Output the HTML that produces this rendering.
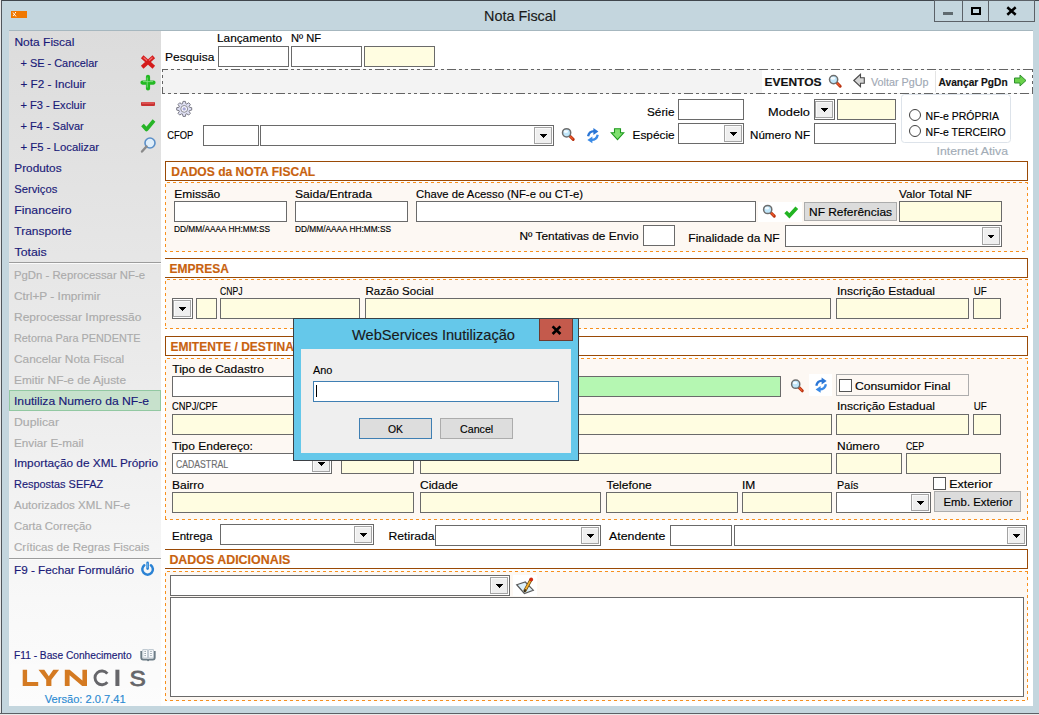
<!DOCTYPE html>
<html><head><meta charset="utf-8"><title>Nota Fiscal</title>
<style>html,body{margin:0;padding:0;background:#c4d6de;overflow:hidden}svg text{font-family:"Liberation Sans",sans-serif}</style>
</head><body>
<svg width="1039" height="715" viewBox="0 0 1039 715" shape-rendering="crispEdges" style="display:block">
<defs>
<linearGradient id="sb" x1="0" y1="0" x2="0" y2="1">
<stop offset="0" stop-color="#dcdcdc"/><stop offset="0.5" stop-color="#ebebeb"/><stop offset="0.84" stop-color="#f8f8f8"/><stop offset="1" stop-color="#fcfcfc"/>
</linearGradient>
</defs>
<rect x="0" y="0" width="1039" height="715" fill="#c4d6de" />
<rect x="0" y="0" width="1039" height="1" fill="#40464c" />
<rect x="0" y="0" width="1" height="715" fill="#e9e9e9" />
<rect x="1" y="0" width="1" height="713" fill="#50565c" />
<rect x="0" y="713" width="1039" height="1" fill="#5c6166" />
<rect x="0" y="714" width="1039" height="1" fill="#eaeaea" />
<rect x="11" y="11" width="16" height="7" fill="#f07800" />
<path d="M13 12.5 L16 16.5 M13 16 L15 13.5 M15.5 12 L15.5 13" stroke="#fff" stroke-width="1" shape-rendering="auto"/>
<text x="484" y="21" font-size="15" fill="#1b1b1b" textLength="72" lengthAdjust="spacingAndGlyphs" stroke="#1b1b1b" stroke-width="0.15" font-family="Liberation Sans" shape-rendering="auto">Nota Fiscal</text>
<rect x="934.5" y="0.5" width="100" height="21" fill="#c4d6de" stroke="#5b6167" stroke-width="1" />
<rect x="962" y="0" width="1" height="22" fill="#5b6167" />
<rect x="988" y="0" width="1" height="22" fill="#5b6167" />
<rect x="943" y="12" width="10" height="3" fill="#5f6a6f" />
<rect x="972.0" y="8.0" width="8" height="6" fill="none" stroke="#000" stroke-width="2" />
<path d="M1007.3 7.3 L1015.7 14.7 M1015.7 7.3 L1007.3 14.7" stroke="#000" stroke-width="2.5" shape-rendering="auto"/>
<rect x="9" y="30" width="1024" height="1" fill="#a6b7bf" />
<rect x="9" y="31" width="152" height="675" fill="url(#sb)" />
<rect x="161" y="31" width="872" height="675" fill="#ffffff" />
<text x="14.4" y="45.7" font-size="11.52" fill="#1a1a78" textLength="60" lengthAdjust="spacingAndGlyphs" stroke="#1a1a78" stroke-width="0.15" font-family="Liberation Sans" >Nota Fiscal</text>
<text x="20.5" y="66.7" font-size="11.52" fill="#1a1a78" textLength="77.4" lengthAdjust="spacingAndGlyphs" stroke="#1a1a78" stroke-width="0.15" font-family="Liberation Sans" >+ SE - Cancelar</text>
<text x="20.5" y="87.6" font-size="11.52" fill="#1a1a78" textLength="65.4" lengthAdjust="spacingAndGlyphs" stroke="#1a1a78" stroke-width="0.15" font-family="Liberation Sans" >+ F2 - Incluir</text>
<text x="20.5" y="108.6" font-size="11.52" fill="#1a1a78" textLength="65.4" lengthAdjust="spacingAndGlyphs" stroke="#1a1a78" stroke-width="0.15" font-family="Liberation Sans" >+ F3 - Excluir</text>
<text x="20.5" y="129.6" font-size="11.52" fill="#1a1a78" textLength="63.3" lengthAdjust="spacingAndGlyphs" stroke="#1a1a78" stroke-width="0.15" font-family="Liberation Sans" >+ F4 - Salvar</text>
<text x="20.5" y="150.6" font-size="11.52" fill="#1a1a78" textLength="78.5" lengthAdjust="spacingAndGlyphs" stroke="#1a1a78" stroke-width="0.15" font-family="Liberation Sans" >+ F5 - Localizar</text>
<text x="14.3" y="171.6" font-size="11.52" fill="#1a1a78" textLength="47.3" lengthAdjust="spacingAndGlyphs" stroke="#1a1a78" stroke-width="0.15" font-family="Liberation Sans" >Produtos</text>
<text x="14.3" y="192.6" font-size="11.52" fill="#1a1a78" textLength="43" lengthAdjust="spacingAndGlyphs" stroke="#1a1a78" stroke-width="0.15" font-family="Liberation Sans" >Serviços</text>
<text x="14.3" y="213.6" font-size="11.52" fill="#1a1a78" textLength="57.4" lengthAdjust="spacingAndGlyphs" stroke="#1a1a78" stroke-width="0.15" font-family="Liberation Sans" >Financeiro</text>
<text x="14.3" y="234.6" font-size="11.52" fill="#1a1a78" textLength="57.4" lengthAdjust="spacingAndGlyphs" stroke="#1a1a78" stroke-width="0.15" font-family="Liberation Sans" >Transporte</text>
<text x="14.5" y="255.6" font-size="11.52" fill="#1a1a78" textLength="32.2" lengthAdjust="spacingAndGlyphs" stroke="#1a1a78" stroke-width="0.15" font-family="Liberation Sans" >Totais</text>
<rect x="9" y="262" width="152" height="1" fill="#9c9c9c" />
<rect x="9" y="263" width="152" height="1" fill="#fbfbfb" />
<rect x="9.5" y="390.5" width="151" height="20" fill="#c7e1cc" stroke="#92c8a2" stroke-width="1" />
<text x="14" y="279.0" font-size="11.52" fill="#ababab" textLength="131" lengthAdjust="spacingAndGlyphs" stroke="#ababab" stroke-width="0.15" font-family="Liberation Sans" >PgDn - Reprocessar NF-e</text>
<text x="14" y="299.94" font-size="11.52" fill="#ababab" textLength="86.4" lengthAdjust="spacingAndGlyphs" stroke="#ababab" stroke-width="0.15" font-family="Liberation Sans" >Ctrl+P - Imprimir</text>
<text x="14" y="320.88" font-size="11.52" fill="#ababab" textLength="127.4" lengthAdjust="spacingAndGlyphs" stroke="#ababab" stroke-width="0.15" font-family="Liberation Sans" >Reprocessar Impressão</text>
<text x="14" y="341.82" font-size="11.52" fill="#ababab" textLength="126.6" lengthAdjust="spacingAndGlyphs" stroke="#ababab" stroke-width="0.15" font-family="Liberation Sans" >Retorna Para PENDENTE</text>
<text x="14" y="362.76" font-size="11.52" fill="#ababab" textLength="110.2" lengthAdjust="spacingAndGlyphs" stroke="#ababab" stroke-width="0.15" font-family="Liberation Sans" >Cancelar Nota Fiscal</text>
<text x="14" y="383.7" font-size="11.52" fill="#ababab" textLength="112" lengthAdjust="spacingAndGlyphs" stroke="#ababab" stroke-width="0.15" font-family="Liberation Sans" >Emitir NF-e de Ajuste</text>
<text x="14" y="404.64" font-size="11.52" fill="#1a1a78" textLength="135" lengthAdjust="spacingAndGlyphs" stroke="#1a1a78" stroke-width="0.15" font-family="Liberation Sans" >Inutiliza Numero da NF-e</text>
<text x="14" y="425.58" font-size="11.52" fill="#ababab" textLength="45" lengthAdjust="spacingAndGlyphs" stroke="#ababab" stroke-width="0.15" font-family="Liberation Sans" >Duplicar</text>
<text x="14" y="446.52" font-size="11.52" fill="#ababab" textLength="69.6" lengthAdjust="spacingAndGlyphs" stroke="#ababab" stroke-width="0.15" font-family="Liberation Sans" >Enviar E-mail</text>
<text x="14" y="467.46" font-size="11.52" fill="#1a1a78" textLength="144" lengthAdjust="spacingAndGlyphs" stroke="#1a1a78" stroke-width="0.15" font-family="Liberation Sans" >Importação de XML Próprio</text>
<text x="14" y="488.4" font-size="11.52" fill="#1a1a78" textLength="89.2" lengthAdjust="spacingAndGlyphs" stroke="#1a1a78" stroke-width="0.15" font-family="Liberation Sans" >Respostas SEFAZ</text>
<text x="14" y="509.34" font-size="11.52" fill="#ababab" textLength="116.2" lengthAdjust="spacingAndGlyphs" stroke="#ababab" stroke-width="0.15" font-family="Liberation Sans" >Autorizados XML NF-e</text>
<text x="14" y="530.28" font-size="11.52" fill="#ababab" textLength="77.5" lengthAdjust="spacingAndGlyphs" stroke="#ababab" stroke-width="0.15" font-family="Liberation Sans" >Carta Correção</text>
<text x="14" y="551.22" font-size="11.52" fill="#ababab" textLength="135.3" lengthAdjust="spacingAndGlyphs" stroke="#ababab" stroke-width="0.15" font-family="Liberation Sans" >Críticas de Regras Fiscais</text>
<rect x="9" y="558" width="152" height="1" fill="#9c9c9c" />
<rect x="9" y="559" width="152" height="1" fill="#fbfbfb" />
<text x="14" y="574" font-size="11.52" fill="#1a1a78" textLength="120" lengthAdjust="spacingAndGlyphs" stroke="#1a1a78" stroke-width="0.15" font-family="Liberation Sans" >F9 - Fechar Formulário</text>
<text x="14" y="658.6" font-size="10" fill="#1a1a78" textLength="117.6" lengthAdjust="spacingAndGlyphs" stroke="#1a1a78" stroke-width="0.15" font-family="Liberation Sans" >F11 - Base Conhecimento</text>
<rect x="11" y="664" width="149" height="24" fill="#fbfbfb" />
<text x="44.7" y="702.6" font-size="11.52" fill="#2a8ad2" textLength="81" lengthAdjust="spacingAndGlyphs" stroke="#2a8ad2" stroke-width="0.15" font-family="Liberation Sans" >Versão: 2.0.7.41</text>
<g shape-rendering="auto"><path d="M143.6 58 L152.4 66 M152.4 58 L143.6 66" stroke="#d41c1c" stroke-width="3.8" stroke-linecap="square"/><path d="M143.5 57.5 L147 60.5 M152.5 57.5 L149 60.5" stroke="#f07070" stroke-width="1.2"/></g>
<g shape-rendering="auto"><path d="M142.5 82.6 H153.5 M148 76.8 V88.4" stroke="#22b822" stroke-width="4.2" stroke-linecap="round"/><path d="M143 81.6 H153 M147.2 77.5 V87.5" stroke="#7ee07e" stroke-width="0.9"/></g>
<g shape-rendering="auto"><rect x="141" y="102" width="14" height="4" rx="1" fill="#c83232"/><rect x="142" y="102.5" width="12" height="1" fill="#ee7070"/></g>
<g shape-rendering="auto"><path d="M142.5 125 L146.5 129.5 L154 120.5" stroke="#26b426" stroke-width="3.6" fill="none" stroke-linejoin="round"/></g>
<g shape-rendering="auto"><circle cx="150" cy="143" r="5" fill="#dfeefa" stroke="#5a8fc8" stroke-width="1.6"/><path d="M146.5 146.5 L142 151.5" stroke="#8a8a8a" stroke-width="2.4" stroke-linecap="round"/></g>
<g shape-rendering="auto"><path d="M144.3 565.2 A5.3 5.3 0 1 0 150.9 565.2" fill="none" stroke="#2a82d4" stroke-width="2.5" stroke-linecap="round"/><path d="M147.6 562.8 V568.6" stroke="#2a82d4" stroke-width="2.6" stroke-linecap="round"/><path d="M147.3 563.2 V567.8" stroke="#8cc8f4" stroke-width="0.8"/></g>
<g shape-rendering="auto"><path d="M142.8 649.6 H147.6 V658 H142.8 Z M148.6 649.6 H153.4 V658 H148.6 Z" fill="#fafcfd" stroke="#b4c0c8" stroke-width="0.9"/><path d="M144.4 651.4 H146 M144.4 653.5 H146 M144.4 655.6 H146 M150.2 651.4 H151.8 M150.2 653.5 H151.8 M150.2 655.6 H151.8" stroke="#8e9ca6" stroke-width="0.9"/><path d="M141.2 651 V657.6 Q141.2 659.6 143.2 659.6 H152.8 Q154.8 659.6 154.8 657.6 V651" fill="none" stroke="#6c7c86" stroke-width="1.7"/><rect x="147.2" y="659.5" width="1.8" height="1.6" fill="#6c7c86"/></g>
<g shape-rendering="auto"><path d="M22.7 669.7 H27.1 V681.9 H38.2 V686 H22.7 Z M38.5 669.7 H44.3 L48.8 676.3 L53.3 669.7 H59.1 L51.4 679.7 V686 H46.2 V679.7 Z M64.8 686 V669.7 H69.7 L82.4 680.6 V669.7 H87 V686 H82.2 L69.6 675.2 V686 Z" fill="#d47a22"/><path d="M107.34 673.60 A6.9 6.9 0 1 0 107.34 682.10" fill="none" stroke="#66666a" stroke-width="2.9"/><rect x="115.4" y="669.7" width="4" height="16.3" fill="#66666a"/><text x="129.4" y="686" font-size="22.5" fill="#66666a" stroke="#66666a" stroke-width="0.8" textLength="16.3" lengthAdjust="spacingAndGlyphs">S</text></g>
<text x="217" y="42" font-size="11.52" fill="#000" textLength="65" lengthAdjust="spacingAndGlyphs" stroke="#000" stroke-width="0.15" font-family="Liberation Sans" >Lançamento</text>
<text x="291" y="42" font-size="11.52" fill="#000" textLength="30" lengthAdjust="spacingAndGlyphs" stroke="#000" stroke-width="0.15" font-family="Liberation Sans" >Nº NF</text>
<text x="165" y="61" font-size="11.52" fill="#000" textLength="49.36" lengthAdjust="spacingAndGlyphs" stroke="#000" stroke-width="0.15" font-family="Liberation Sans" >Pesquisa</text>
<rect x="218.5" y="46.5" width="70" height="20" fill="#fff" stroke="#6a6a6a" stroke-width="1" />
<rect x="291.5" y="46.5" width="70" height="20" fill="#fff" stroke="#6a6a6a" stroke-width="1" />
<rect x="364.5" y="46.5" width="70" height="20" fill="#fffde1" stroke="#6a6a6a" stroke-width="1" />
<rect x="162" y="69" width="871" height="25" fill="#f3f3f3" />
<rect x="762" y="70" width="271" height="23" fill="#ffffff" />
<g fill="none" stroke="#646464" stroke-width="1" stroke-dasharray="9 3 3 3 3 3"><path d="M162 69.5 H1033" stroke-dashoffset="3"/><path d="M162 93.5 H1033" stroke-dashoffset="6"/><path d="M162.5 69 V94" stroke-dashoffset="6"/><path d="M1032.5 69 V94" stroke-dashoffset="6"/></g>
<text x="764.5" y="85.8" font-size="11.5" fill="#111" font-weight="700" textLength="57" lengthAdjust="spacingAndGlyphs" stroke="#111" stroke-width="0.15" font-family="Liberation Sans" >EVENTOS</text>
<g shape-rendering="auto"><path d="M836.8000000000001 82.8 L840.2 86.19999999999999" stroke="#b83210" stroke-width="3" stroke-linecap="round"/><path d="M837.0 83.0 L839.6 85.6" stroke="#ee5a2a" stroke-width="1.3" stroke-linecap="round"/><circle cx="833.6" cy="79.6" r="4.1" fill="#bfe6fa" stroke="#6e6e6e" stroke-width="1.5"/><ellipse cx="832.9" cy="78.39999999999999" rx="2.2" ry="1.3" fill="#f4fbff"/></g>
<g shape-rendering="auto"><path d="M853.8 80.5 L860.5 74.3 V77.8 H864.3 V83.3 H860.5 V86.7 Z" fill="#d6d6d6" stroke="#4a4a4a" stroke-width="1.1"/></g>
<text x="871" y="85.6" font-size="11" fill="#a0a8b4" textLength="57.5" lengthAdjust="spacingAndGlyphs" stroke="#a0a8b4" stroke-width="0.15" font-family="Liberation Sans" >Voltar PgUp</text>
<rect x="935" y="71" width="1" height="21" fill="#e4e4e4" />
<text x="938.6" y="85.5" font-size="11" fill="#111" font-weight="700" textLength="69" lengthAdjust="spacingAndGlyphs" stroke="#111" stroke-width="0.15" font-family="Liberation Sans" >Avançar PgDn</text>
<g shape-rendering="auto"><path d="M1026 80.5 L1020 75 V78 H1014.5 V83 H1020 V86 Z" fill="#6ad24a" stroke="#2f8f2f" stroke-width="1"/></g>
<g shape-rendering="auto"><path d="M182.49 103.78 L183.01 101.39 L185.39 101.39 L185.91 103.78 L186.61 104.07 L188.67 102.75 L190.35 104.43 L189.03 106.49 L189.32 107.19 L191.71 107.71 L191.71 110.09 L189.32 110.61 L189.03 111.31 L190.35 113.37 L188.67 115.05 L186.61 113.73 L185.91 114.02 L185.39 116.41 L183.01 116.41 L182.49 114.02 L181.79 113.73 L179.73 115.05 L178.05 113.37 L179.37 111.31 L179.08 110.61 L176.69 110.09 L176.69 107.71 L179.08 107.19 L179.37 106.49 L178.05 104.43 L179.73 102.75 L181.79 104.07 Z" fill="#dedff2" stroke="#7a7a86" stroke-width="1"/><circle cx="184.2" cy="108.9" r="3.4" fill="#fbfbff" stroke="#8a8a94" stroke-width="1"/><circle cx="184.2" cy="108.9" r="1.7" fill="#a8a8d8"/></g>
<text x="167.3" y="139" font-size="11.52" fill="#000" textLength="26" lengthAdjust="spacingAndGlyphs" stroke="#000" stroke-width="0.15" font-family="Liberation Sans" >CFOP</text>
<rect x="203.5" y="125.5" width="55" height="20" fill="#fff" stroke="#6a6a6a" stroke-width="1" />
<rect x="260.5" y="125.5" width="293" height="20" fill="#fff" stroke="#6a6a6a" stroke-width="1" />
<rect x="534.5" y="127.5" width="17" height="16" fill="#efefef" stroke="#a3a3a3" stroke-width="1" />
<rect x="535" y="128" width="16" height="1" fill="#fafafa" />
<rect x="535" y="128" width="1" height="15" fill="#fafafa" />
<path d="M539.0 134.0 L547.0 134.0 L543.0 138.0 Z" fill="#000"/>
<g shape-rendering="auto"><path d="M569.8000000000001 136.0 L573.2 139.4" stroke="#b83210" stroke-width="3" stroke-linecap="round"/><path d="M570.0 136.2 L572.6 138.8" stroke="#ee5a2a" stroke-width="1.3" stroke-linecap="round"/><circle cx="566.6" cy="132.8" r="4.1" fill="#bfe6fa" stroke="#6e6e6e" stroke-width="1.5"/><ellipse cx="565.9" cy="131.6" rx="2.2" ry="1.3" fill="#f4fbff"/></g>
<g shape-rendering="auto" transform="translate(-228.2 -249.5)"><path d="M816.3 385.8 Q817.2 380.6 822.6 380.6" fill="none" stroke="#2a76d6" stroke-width="2.3"/><path d="M821.6 377.6 L826.6 381 L821.6 384.4 Z" fill="#2a76d6"/><path d="M825.9 384.2 Q825 389.4 819.6 389.4" fill="none" stroke="#3a8ae6" stroke-width="2.3"/><path d="M820.6 386 L815.6 389.4 L820.6 392.8 Z" fill="#3a8ae6"/></g>
<g shape-rendering="auto"><path d="M617.5 139.7 L611.3 132.8 H614.5 V128.8 H620.5 V132.8 H623.7 Z" fill="#80e070" stroke="#1f9a1f" stroke-width="1.1"/></g>
<text x="632.6" y="139" font-size="11.52" fill="#000" textLength="42" lengthAdjust="spacingAndGlyphs" stroke="#000" stroke-width="0.15" font-family="Liberation Sans" >Espécie</text>
<rect x="678.5" y="123.5" width="65" height="20" fill="#fff" stroke="#6a6a6a" stroke-width="1" />
<rect x="724.5" y="125.5" width="17" height="16" fill="#efefef" stroke="#a3a3a3" stroke-width="1" />
<rect x="725" y="126" width="16" height="1" fill="#fafafa" />
<rect x="725" y="126" width="1" height="15" fill="#fafafa" />
<path d="M729.0 132.0 L737.0 132.0 L733.0 136.0 Z" fill="#000"/>
<text x="647" y="116" font-size="11.52" fill="#000" textLength="27.5" lengthAdjust="spacingAndGlyphs" stroke="#000" stroke-width="0.15" font-family="Liberation Sans" >Série</text>
<rect x="678.5" y="99.5" width="65" height="20" fill="#fff" stroke="#6a6a6a" stroke-width="1" />
<text x="768" y="116" font-size="11.52" fill="#000" textLength="42" lengthAdjust="spacingAndGlyphs" stroke="#000" stroke-width="0.15" font-family="Liberation Sans" >Modelo</text>
<rect x="814.5" y="99.5" width="20" height="20" fill="#fff" stroke="#6a6a6a" stroke-width="1" />
<rect x="815.5" y="101.5" width="17" height="16" fill="#efefef" stroke="#a3a3a3" stroke-width="1" />
<rect x="816" y="102" width="16" height="1" fill="#fafafa" />
<rect x="816" y="102" width="1" height="15" fill="#fafafa" />
<path d="M820.0 108.0 L828.0 108.0 L824.0 112.0 Z" fill="#000"/>
<rect x="837.5" y="99.5" width="58" height="20" fill="#fffde1" stroke="#6a6a6a" stroke-width="1" />
<text x="750" y="139" font-size="11.52" fill="#000" textLength="60" lengthAdjust="spacingAndGlyphs" stroke="#000" stroke-width="0.15" font-family="Liberation Sans" >Número NF</text>
<rect x="814.5" y="123.5" width="81" height="20" fill="#fff" stroke="#6a6a6a" stroke-width="1" />
<rect x="901.5" y="94.5" width="109" height="48" rx="3" fill="#fff" stroke="#dde3ea" stroke-width="1" shape-rendering="auto"/>
<g shape-rendering="auto"><circle cx="915" cy="115" r="5.5" fill="#fff" stroke="#404040" stroke-width="1"/><circle cx="915" cy="131" r="5.5" fill="#fff" stroke="#404040" stroke-width="1"/></g>
<text x="925.6" y="119.7" font-size="11" fill="#000" textLength="73.4" lengthAdjust="spacingAndGlyphs" stroke="#000" stroke-width="0.15" font-family="Liberation Sans" >NF-e PRÓPRIA</text>
<text x="925.6" y="135.6" font-size="11" fill="#000" textLength="80" lengthAdjust="spacingAndGlyphs" stroke="#000" stroke-width="0.15" font-family="Liberation Sans" >NF-e TERCEIRO</text>
<text x="936.6" y="154.5" font-size="11.52" fill="#a2acb6" textLength="71.4" lengthAdjust="spacingAndGlyphs" stroke="#a2acb6" stroke-width="0.15" font-family="Liberation Sans" >Internet Ativa</text>
<rect x="165.5" y="161.5" width="862" height="19" fill="#fff" stroke="#9a4a06" stroke-width="1" />
<text x="171.25" y="175.75" font-size="12" fill="#c8620f" font-weight="700" textLength="144" lengthAdjust="spacingAndGlyphs" stroke="#c8620f" stroke-width="0.15" font-family="Liberation Sans" >DADOS da NOTA FISCAL</text>
<rect x="165" y="182" width="863" height="70" fill="#fdf8f3" />
<g fill="none" stroke="#f7901e" stroke-width="1" stroke-dasharray="3 3"><path d="M165 182.5 H1028" stroke-dashoffset="4"/><path d="M165 251.5 H1028" stroke-dashoffset="1"/><path d="M165.5 182 V252" stroke-dashoffset="4"/><path d="M1027.5 182 V252" stroke-dashoffset="1"/></g>
<text x="174.25" y="197.5" font-size="11.52" fill="#000" textLength="46" lengthAdjust="spacingAndGlyphs" stroke="#000" stroke-width="0.15" font-family="Liberation Sans" >Emissão</text>
<rect x="174.5" y="201.5" width="112" height="20" fill="#fff" stroke="#6a6a6a" stroke-width="1" />
<text x="174" y="231.75" font-size="9" fill="#000" textLength="96" lengthAdjust="spacingAndGlyphs" stroke="#000" stroke-width="0.15" font-family="Liberation Sans" >DD/MM/AAAA HH:MM:SS</text>
<text x="295" y="197.5" font-size="11.52" fill="#000" textLength="77" lengthAdjust="spacingAndGlyphs" stroke="#000" stroke-width="0.15" font-family="Liberation Sans" >Saida/Entrada</text>
<rect x="295.5" y="201.5" width="112" height="20" fill="#fff" stroke="#6a6a6a" stroke-width="1" />
<text x="295" y="231.75" font-size="9" fill="#000" textLength="96" lengthAdjust="spacingAndGlyphs" stroke="#000" stroke-width="0.15" font-family="Liberation Sans" >DD/MM/AAAA HH:MM:SS</text>
<text x="416" y="197.9" font-size="11.52" fill="#000" textLength="167" lengthAdjust="spacingAndGlyphs" stroke="#000" stroke-width="0.15" font-family="Liberation Sans" >Chave de Acesso (NF-e ou CT-e)</text>
<rect x="416.5" y="201.5" width="339" height="20" fill="#fff" stroke="#6a6a6a" stroke-width="1" />
<rect x="758" y="202" width="44" height="20" fill="#fff" />
<g shape-rendering="auto"><path d="M770.9000000000001 212.7 L774.3000000000001 216.1" stroke="#b83210" stroke-width="3" stroke-linecap="round"/><path d="M771.1 212.9 L773.7 215.5" stroke="#ee5a2a" stroke-width="1.3" stroke-linecap="round"/><circle cx="767.7" cy="209.5" r="4.1" fill="#bfe6fa" stroke="#6e6e6e" stroke-width="1.5"/><ellipse cx="767.0" cy="208.3" rx="2.2" ry="1.3" fill="#f4fbff"/></g>
<g shape-rendering="auto"><path d="M785.6 212 L789.4 215.8 L796.8 207.8" stroke="#22b422" stroke-width="3.7" fill="none" stroke-linejoin="miter"/></g>
<rect x="804.5" y="202.5" width="92" height="18" fill="#dcdcdc" stroke="#acacac" stroke-width="1" />
<text x="809" y="216" font-size="11.52" fill="#000" textLength="83" lengthAdjust="spacingAndGlyphs" stroke="#000" stroke-width="0.15" font-family="Liberation Sans" >NF Referências</text>
<text x="899" y="197.5" font-size="11.52" fill="#000" textLength="73" lengthAdjust="spacingAndGlyphs" stroke="#000" stroke-width="0.15" font-family="Liberation Sans" >Valor Total NF</text>
<rect x="899.5" y="201.5" width="102" height="20" fill="#fffde1" stroke="#6a6a6a" stroke-width="1" />
<text x="519.5" y="240" font-size="11.52" fill="#000" textLength="119" lengthAdjust="spacingAndGlyphs" stroke="#000" stroke-width="0.15" font-family="Liberation Sans" >Nº Tentativas de Envio</text>
<rect x="643.5" y="225.5" width="31" height="20" fill="#fff" stroke="#6a6a6a" stroke-width="1" />
<text x="688.3" y="241.6" font-size="11.52" fill="#000" textLength="91.38" lengthAdjust="spacingAndGlyphs" stroke="#000" stroke-width="0.15" font-family="Liberation Sans" >Finalidade da NF</text>
<rect x="785.5" y="225.5" width="216" height="21" fill="#fff" stroke="#6a6a6a" stroke-width="1" />
<rect x="982.5" y="227.5" width="17" height="17" fill="#efefef" stroke="#a3a3a3" stroke-width="1" />
<rect x="983" y="228" width="16" height="1" fill="#fafafa" />
<rect x="983" y="228" width="1" height="16" fill="#fafafa" />
<path d="M987.0 234.5 L995.0 234.5 L991.0 238.5 Z" fill="#000"/>
<rect x="165" y="258" width="863" height="1" fill="#9a4a06" />
<rect x="165" y="277" width="863" height="1" fill="#9a4a06" />
<rect x="1027" y="258" width="1" height="20" fill="#9a4a06" />
<text x="169.5" y="273" font-size="12" fill="#c8620f" font-weight="700" stroke="#c8620f" stroke-width="0.15" font-family="Liberation Sans" >EMPRESA</text>
<rect x="165" y="279" width="863" height="50" fill="#fdf8f3" />
<g fill="none" stroke="#f7901e" stroke-width="1" stroke-dasharray="3 3"><path d="M165 279.5 H1028" stroke-dashoffset="4"/><path d="M165 328.5 H1028" stroke-dashoffset="1"/><path d="M165.5 279 V329" stroke-dashoffset="4"/><path d="M1027.5 279 V329" stroke-dashoffset="2"/></g>
<rect x="172.5" y="298.5" width="20" height="20" fill="#fff" stroke="#6a6a6a" stroke-width="1" />
<rect x="173.5" y="300.5" width="17" height="16" fill="#efefef" stroke="#a3a3a3" stroke-width="1" />
<rect x="174" y="301" width="16" height="1" fill="#fafafa" />
<rect x="174" y="301" width="1" height="15" fill="#fafafa" />
<path d="M178.0 307.0 L186.0 307.0 L182.0 311.0 Z" fill="#000"/>
<rect x="196.5" y="298.5" width="20" height="20" fill="#fffde1" stroke="#6a6a6a" stroke-width="1" />
<text x="220" y="294.5" font-size="11.52" fill="#000" textLength="22.5" lengthAdjust="spacingAndGlyphs" stroke="#000" stroke-width="0.15" font-family="Liberation Sans" >CNPJ</text>
<rect x="220.5" y="298.5" width="139" height="20" fill="#fffde1" stroke="#6a6a6a" stroke-width="1" />
<text x="365.5" y="294.5" font-size="11.52" fill="#000" textLength="68" lengthAdjust="spacingAndGlyphs" stroke="#000" stroke-width="0.15" font-family="Liberation Sans" >Razão Social</text>
<rect x="365.5" y="298.5" width="465" height="20" fill="#fffde1" stroke="#6a6a6a" stroke-width="1" />
<text x="837" y="295" font-size="11.52" fill="#000" textLength="98" lengthAdjust="spacingAndGlyphs" stroke="#000" stroke-width="0.15" font-family="Liberation Sans" >Inscrição Estadual</text>
<rect x="836.5" y="298.5" width="132" height="20" fill="#fffde1" stroke="#6a6a6a" stroke-width="1" />
<text x="973.8" y="295" font-size="11.52" fill="#000" textLength="13" lengthAdjust="spacingAndGlyphs" stroke="#000" stroke-width="0.15" font-family="Liberation Sans" >UF</text>
<rect x="973.5" y="298.5" width="27" height="20" fill="#fffde1" stroke="#6a6a6a" stroke-width="1" />
<rect x="165.5" y="336.5" width="862" height="19" fill="#fff" stroke="#9a4a06" stroke-width="1" />
<text x="170.5" y="350.8" font-size="12" fill="#c8620f" font-weight="700" stroke="#c8620f" stroke-width="0.15" font-family="Liberation Sans" >EMITENTE / DESTINATÁRIO</text>
<rect x="165" y="358" width="863" height="162" fill="#fdf8f3" />
<g fill="none" stroke="#f7901e" stroke-width="1" stroke-dasharray="3 3"><path d="M165 358.5 H1028" stroke-dashoffset="4"/><path d="M165 519.5 H1028" stroke-dashoffset="1"/><path d="M165.5 358 V520" stroke-dashoffset="4"/><path d="M1027.5 358 V520" stroke-dashoffset="3"/></g>
<text x="172.3" y="372.8" font-size="11.52" fill="#000" textLength="91.6" lengthAdjust="spacingAndGlyphs" stroke="#000" stroke-width="0.15" font-family="Liberation Sans" >Tipo de Cadastro</text>
<rect x="172.5" y="376.5" width="159" height="20" fill="#fff" stroke="#6a6a6a" stroke-width="1" />
<rect x="341.5" y="376.5" width="439" height="20" fill="#b5f7b2" stroke="#6a6a6a" stroke-width="1" />
<g shape-rendering="auto"><path d="M798.9000000000001 387.4 L802.3000000000001 390.8" stroke="#b83210" stroke-width="3" stroke-linecap="round"/><path d="M799.1 387.59999999999997 L801.7 390.2" stroke="#ee5a2a" stroke-width="1.3" stroke-linecap="round"/><circle cx="795.7" cy="384.2" r="4.1" fill="#bfe6fa" stroke="#6e6e6e" stroke-width="1.5"/><ellipse cx="795.0" cy="383.0" rx="2.2" ry="1.3" fill="#f4fbff"/></g>
<rect x="809" y="374" width="23" height="22" fill="#fff" />
<g shape-rendering="auto" transform="translate(0 0)"><path d="M816.3 385.8 Q817.2 380.6 822.6 380.6" fill="none" stroke="#2a76d6" stroke-width="2.3"/><path d="M821.6 377.6 L826.6 381 L821.6 384.4 Z" fill="#2a76d6"/><path d="M825.9 384.2 Q825 389.4 819.6 389.4" fill="none" stroke="#3a8ae6" stroke-width="2.3"/><path d="M820.6 386 L815.6 389.4 L820.6 392.8 Z" fill="#3a8ae6"/></g>
<rect x="836.5" y="374.5" width="132" height="21" fill="none" stroke="#adadad" stroke-width="1" />
<rect x="839.5" y="379.5" width="12" height="12" fill="#fff" stroke="#555" stroke-width="1" />
<text x="855" y="390" font-size="11.52" fill="#000" textLength="95.5" lengthAdjust="spacingAndGlyphs" stroke="#000" stroke-width="0.15" font-family="Liberation Sans" >Consumidor Final</text>
<text x="172" y="410" font-size="11.52" fill="#000" textLength="45.5" lengthAdjust="spacingAndGlyphs" stroke="#000" stroke-width="0.15" font-family="Liberation Sans" >CNPJ/CPF</text>
<rect x="172.5" y="414.5" width="659" height="20" fill="#fffde1" stroke="#6a6a6a" stroke-width="1" />
<text x="837" y="410" font-size="11.52" fill="#000" textLength="98" lengthAdjust="spacingAndGlyphs" stroke="#000" stroke-width="0.15" font-family="Liberation Sans" >Inscrição Estadual</text>
<rect x="836.5" y="414.5" width="132" height="20" fill="#fffde1" stroke="#6a6a6a" stroke-width="1" />
<text x="973.8" y="410" font-size="11.52" fill="#000" textLength="13" lengthAdjust="spacingAndGlyphs" stroke="#000" stroke-width="0.15" font-family="Liberation Sans" >UF</text>
<rect x="973.5" y="414.5" width="27" height="20" fill="#fffde1" stroke="#6a6a6a" stroke-width="1" />
<text x="172" y="449.9" font-size="11.52" fill="#000" textLength="80.93" lengthAdjust="spacingAndGlyphs" stroke="#000" stroke-width="0.15" font-family="Liberation Sans" >Tipo Endereço:</text>
<rect x="172.5" y="453.5" width="159" height="20" fill="#fff" stroke="#6a6a6a" stroke-width="1" />
<rect x="312.5" y="455.5" width="17" height="16" fill="#efefef" stroke="#a3a3a3" stroke-width="1" />
<rect x="313" y="456" width="16" height="1" fill="#fafafa" />
<rect x="313" y="456" width="1" height="15" fill="#fafafa" />
<path d="M317.0 462.0 L325.0 462.0 L321.0 466.0 Z" fill="#000"/>
<text x="176" y="468" font-size="10" fill="#6e6e6e" textLength="52" lengthAdjust="spacingAndGlyphs" stroke="#6e6e6e" stroke-width="0.15" font-family="Liberation Sans" >CADASTRAL</text>
<rect x="341.5" y="453.5" width="72" height="20" fill="#fffde1" stroke="#6a6a6a" stroke-width="1" />
<rect x="420.5" y="453.5" width="411" height="20" fill="#fffde1" stroke="#6a6a6a" stroke-width="1" />
<text x="837" y="449.5" font-size="11.52" fill="#000" textLength="42.68" lengthAdjust="spacingAndGlyphs" stroke="#000" stroke-width="0.15" font-family="Liberation Sans" >Número</text>
<rect x="836.5" y="453.5" width="65" height="20" fill="#fffde1" stroke="#6a6a6a" stroke-width="1" />
<text x="906" y="449.5" font-size="11.52" fill="#000" textLength="18" lengthAdjust="spacingAndGlyphs" stroke="#000" stroke-width="0.15" font-family="Liberation Sans" >CEP</text>
<rect x="906.5" y="453.5" width="94" height="20" fill="#fffde1" stroke="#6a6a6a" stroke-width="1" />
<text x="172" y="489" font-size="11.52" fill="#000" textLength="32.01" lengthAdjust="spacingAndGlyphs" stroke="#000" stroke-width="0.15" font-family="Liberation Sans" >Bairro</text>
<rect x="172.5" y="492.5" width="241" height="20" fill="#fffde1" stroke="#6a6a6a" stroke-width="1" />
<text x="420" y="489" font-size="11.52" fill="#000" textLength="38.02" lengthAdjust="spacingAndGlyphs" stroke="#000" stroke-width="0.15" font-family="Liberation Sans" >Cidade</text>
<rect x="420.5" y="492.5" width="180" height="20" fill="#fffde1" stroke="#6a6a6a" stroke-width="1" />
<text x="606.4" y="488.8" font-size="11.52" fill="#000" textLength="45.37" lengthAdjust="spacingAndGlyphs" stroke="#000" stroke-width="0.15" font-family="Liberation Sans" >Telefone</text>
<rect x="606.5" y="492.5" width="131" height="20" fill="#fffde1" stroke="#6a6a6a" stroke-width="1" />
<text x="742" y="488.8" font-size="11.52" fill="#000" textLength="13.33" lengthAdjust="spacingAndGlyphs" stroke="#000" stroke-width="0.15" font-family="Liberation Sans" >IM</text>
<rect x="742.5" y="492.5" width="89" height="20" fill="#fffde1" stroke="#6a6a6a" stroke-width="1" />
<text x="837" y="489" font-size="11.52" fill="#000" textLength="21.5" lengthAdjust="spacingAndGlyphs" stroke="#000" stroke-width="0.15" font-family="Liberation Sans" >País</text>
<rect x="836.5" y="492.5" width="94" height="20" fill="#fff" stroke="#6a6a6a" stroke-width="1" />
<rect x="911.5" y="494.5" width="17" height="16" fill="#efefef" stroke="#a3a3a3" stroke-width="1" />
<rect x="912" y="495" width="16" height="1" fill="#fafafa" />
<rect x="912" y="495" width="1" height="15" fill="#fafafa" />
<path d="M916.0 501.0 L924.0 501.0 L920.0 505.0 Z" fill="#000"/>
<rect x="933.5" y="477.5" width="12" height="12" fill="#fff" stroke="#555" stroke-width="1" />
<text x="949.3" y="488" font-size="11.52" fill="#000" textLength="43" lengthAdjust="spacingAndGlyphs" stroke="#000" stroke-width="0.15" font-family="Liberation Sans" >Exterior</text>
<rect x="934.5" y="491.5" width="86" height="20" fill="#dcdcdc" stroke="#acacac" stroke-width="1" />
<text x="943.5" y="506" font-size="11.52" fill="#000" textLength="69" lengthAdjust="spacingAndGlyphs" stroke="#000" stroke-width="0.15" font-family="Liberation Sans" >Emb. Exterior</text>
<text x="172" y="539.8" font-size="11.52" fill="#000" textLength="40.4" lengthAdjust="spacingAndGlyphs" stroke="#000" stroke-width="0.15" font-family="Liberation Sans" >Entrega</text>
<rect x="220.5" y="524.5" width="153" height="20" fill="#fff" stroke="#6a6a6a" stroke-width="1" />
<rect x="354.5" y="526.5" width="17" height="16" fill="#efefef" stroke="#a3a3a3" stroke-width="1" />
<rect x="355" y="527" width="16" height="1" fill="#fafafa" />
<rect x="355" y="527" width="1" height="15" fill="#fafafa" />
<path d="M359.0 533.0 L367.0 533.0 L363.0 537.0 Z" fill="#000"/>
<text x="388.5" y="540" font-size="11.52" fill="#000" textLength="46" lengthAdjust="spacingAndGlyphs" stroke="#000" stroke-width="0.15" font-family="Liberation Sans" >Retirada</text>
<rect x="435.5" y="525.5" width="165" height="20" fill="#fff" stroke="#6a6a6a" stroke-width="1" />
<rect x="581.5" y="527.5" width="17" height="16" fill="#efefef" stroke="#a3a3a3" stroke-width="1" />
<rect x="582" y="528" width="16" height="1" fill="#fafafa" />
<rect x="582" y="528" width="1" height="15" fill="#fafafa" />
<path d="M586.0 534.0 L594.0 534.0 L590.0 538.0 Z" fill="#000"/>
<text x="609" y="540" font-size="11.52" fill="#000" textLength="56.3" lengthAdjust="spacingAndGlyphs" stroke="#000" stroke-width="0.15" font-family="Liberation Sans" >Atendente</text>
<rect x="670.5" y="525.5" width="61" height="20" fill="#fff" stroke="#6a6a6a" stroke-width="1" />
<rect x="734.5" y="525.5" width="292" height="20" fill="#fff" stroke="#6a6a6a" stroke-width="1" />
<rect x="1007.5" y="527.5" width="17" height="16" fill="#efefef" stroke="#a3a3a3" stroke-width="1" />
<rect x="1008" y="528" width="16" height="1" fill="#fafafa" />
<rect x="1008" y="528" width="1" height="15" fill="#fafafa" />
<path d="M1012.0 534.0 L1020.0 534.0 L1016.0 538.0 Z" fill="#000"/>
<rect x="165" y="549" width="863" height="1" fill="#9a4a06" />
<rect x="165" y="568" width="863" height="1" fill="#9a4a06" />
<rect x="1027" y="549" width="1" height="20" fill="#9a4a06" />
<text x="169.4" y="563.5" font-size="12" fill="#c8620f" font-weight="700" textLength="121" lengthAdjust="spacingAndGlyphs" stroke="#c8620f" stroke-width="0.15" font-family="Liberation Sans" >DADOS ADICIONAIS</text>
<rect x="165" y="571" width="863" height="130" fill="#fdf8f3" />
<g fill="none" stroke="#f7901e" stroke-width="1" stroke-dasharray="3 3"><path d="M165 571.5 H1028" stroke-dashoffset="4"/><path d="M165 700.5 H1028" stroke-dashoffset="1"/><path d="M165.5 571 V701" stroke-dashoffset="4"/><path d="M1027.5 571 V701" stroke-dashoffset="0"/></g>
<rect x="170.5" y="575.5" width="339" height="20" fill="#fff" stroke="#6a6a6a" stroke-width="1" />
<rect x="490.5" y="577.5" width="17" height="16" fill="#efefef" stroke="#a3a3a3" stroke-width="1" />
<rect x="491" y="578" width="16" height="1" fill="#fafafa" />
<rect x="491" y="578" width="1" height="15" fill="#fafafa" />
<path d="M495.0 584.0 L503.0 584.0 L499.0 588.0 Z" fill="#000"/>
<rect x="513" y="575" width="24" height="21" fill="#ffffff" />
<g shape-rendering="auto"><path d="M516.7 584.7 L525.3 582 L533.3 590.2 L524.4 593.5 Z" fill="#dcf0fa" stroke="#5a5a5a" stroke-width="1.2"/><path d="M525 590.5 L530.8 580" stroke="#6a4a10" stroke-width="3.2" stroke-linecap="round"/><path d="M525.2 590 L530.6 580.3" stroke="#f4b030" stroke-width="1.7"/><circle cx="531.2" cy="579.4" r="1.9" fill="#d42a10"/><path d="M524.2 591.6 L525.6 589.4" stroke="#222" stroke-width="1.2"/></g>
<rect x="170.5" y="597.5" width="853" height="99" fill="#fff" stroke="#6a6a6a" stroke-width="1" />
<rect x="293.5" y="318.5" width="285" height="142" fill="#65c8ea" stroke="#3b4045" stroke-width="1" />
<rect x="301" y="349" width="270" height="104" fill="#efefef" />
<text x="352" y="339.6" font-size="15" fill="#1a1a1a" textLength="163" lengthAdjust="spacingAndGlyphs" stroke="#1a1a1a" stroke-width="0.15" font-family="Liberation Sans" >WebServices Inutilização</text>
<rect x="539" y="319" width="34" height="22" fill="#6e3a2e" />
<rect x="540" y="319" width="32" height="21" fill="#c45a4c" />
<g shape-rendering="auto"><path d="M552.6 326.4 L560.4 334 M560.4 326.4 L552.6 334" stroke="#000" stroke-width="2.7"/></g>
<text x="313" y="373.5" font-size="11.52" fill="#000" textLength="19.4" lengthAdjust="spacingAndGlyphs" stroke="#000" stroke-width="0.15" font-family="Liberation Sans" >Ano</text>
<rect x="313.5" y="381.5" width="245" height="20" fill="#fff" stroke="#3f7fb3" stroke-width="1" />
<rect x="316" y="385" width="1" height="12" fill="#000" />
<rect x="359.5" y="418.5" width="72" height="20" fill="#dddddd" stroke="#3f7fb3" stroke-width="1" />
<text x="388" y="433" font-size="11.52" fill="#000" textLength="15" lengthAdjust="spacingAndGlyphs" stroke="#000" stroke-width="0.15" font-family="Liberation Sans" >OK</text>
<rect x="440.5" y="418.5" width="72" height="20" fill="#dddddd" stroke="#acacac" stroke-width="1" />
<text x="460" y="433" font-size="11.52" fill="#000" textLength="33.2" lengthAdjust="spacingAndGlyphs" stroke="#000" stroke-width="0.15" font-family="Liberation Sans" >Cancel</text>
</svg>
</body></html>
